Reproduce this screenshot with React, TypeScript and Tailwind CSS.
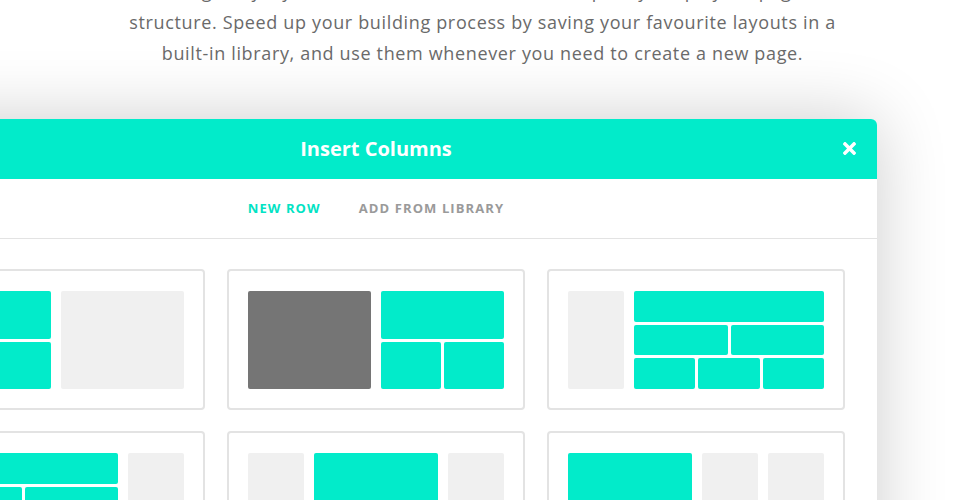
import { FaTimes } from 'react-icons/fa';

const TEAL = 'bg-[#02ebca]';

function Teal({ className = '' }: { className?: string }) {
  return <div className={`${TEAL} rounded-[2px] ${className}`} />;
}

function Gray({ className = '' }: { className?: string }) {
  return <div className={`bg-[#f0f0f0] rounded-[2px] ${className}`} />;
}

// three rows: full, halves, thirds
function Stack3({ className = '' }: { className?: string }) {
  return (
    <div className={`flex flex-col gap-[3px] ${className}`}>
      <Teal className="h-[31px]" />
      <div className="flex gap-[3px] h-[30px]">
        <Teal className="flex-1" />
        <Teal className="flex-1" />
      </div>
      <div className="flex gap-[3px] h-[31px]">
        <Teal className="flex-1" />
        <Teal className="flex-1" />
        <Teal className="flex-1" />
      </div>
    </div>
  );
}

function Card({ children }: { children: React.ReactNode }) {
  return (
    <div className="border-2 border-[#e3e3e3] rounded-[4px] px-[19px] pt-[20px] pb-[19px] bg-white">
      <div className="flex gap-[10px] h-[98px]">{children}</div>
    </div>
  );
}

export default function App() {
  return (
    <div className="w-[965px] h-[500px] overflow-hidden bg-white">
      <p
        className="mt-[-24px] text-center text-[18px] leading-[31px] text-[#6a6a6a] tracking-[0.65px]"
        style={{ fontFamily: '"Open Sans", "Liberation Sans", sans-serif' }}
      >
        <span className="block">Design any layout with rows and columns, and quickly shape your page</span>
        <span className="block">structure. Speed up your building process by saving your favourite layouts in a</span>
        <span className="block">built-in library, and use them whenever you need to create a new page.</span>
      </p>

      <div
        className="ml-[-125px] mt-[50px] w-[1002px] bg-white rounded-t-[6px] shadow-[0_0_70px_rgba(0,0,0,0.2)]"
        style={{ fontFamily: '"Open Sans", "Liberation Sans", sans-serif' }}
      >
        <div className={`relative h-[60px] ${TEAL} rounded-t-[6px] flex items-center justify-center`}>
          <h1 className="text-white font-bold text-[20px]">Insert Columns</h1>
          <button className="absolute right-[18px] top-[20px] text-white">
            <FaTimes size={19} />
          </button>
        </div>

        <div className="h-[60px] border-b border-[#e3e3e3] flex items-center justify-center gap-[38px] text-[13px] font-bold tracking-[1.1px] pt-[1px]">
          <span className="text-[#02e3c4]">NEW ROW</span>
          <span className="text-[#9a9a9a]">ADD FROM LIBRARY</span>
        </div>

        <div className="grid grid-cols-3 gap-x-[22px] gap-y-[21px] px-[32px] pt-[30px] pb-[30px]">
          <Card>
            <div className="flex-1 flex flex-col gap-[3px]">
              <Teal className="h-[48px]" />
              <Teal className="h-[47px]" />
            </div>
            <Gray className="flex-1" />
          </Card>
          <Card>
            <div className="flex-1 bg-[#757575] rounded-[2px]" />
            <div className="flex-1 flex flex-col gap-[3px]">
              <Teal className="h-[48px]" />
              <div className="flex gap-[3px] h-[47px]">
                <Teal className="flex-1" />
                <Teal className="flex-1" />
              </div>
            </div>
          </Card>
          <Card>
            <Gray className="w-[56px]" />
            <Stack3 className="flex-1" />
          </Card>

          <Card>
            <Stack3 className="flex-1" />
            <Gray className="w-[56px]" />
          </Card>
          <Card>
            <Gray className="w-[56px]" />
            <Teal className="flex-1" />
            <Gray className="w-[56px]" />
          </Card>
          <Card>
            <Teal className="flex-1" />
            <Gray className="w-[56px]" />
            <Gray className="w-[56px]" />
          </Card>
        </div>
      </div>
    </div>
  );
}
